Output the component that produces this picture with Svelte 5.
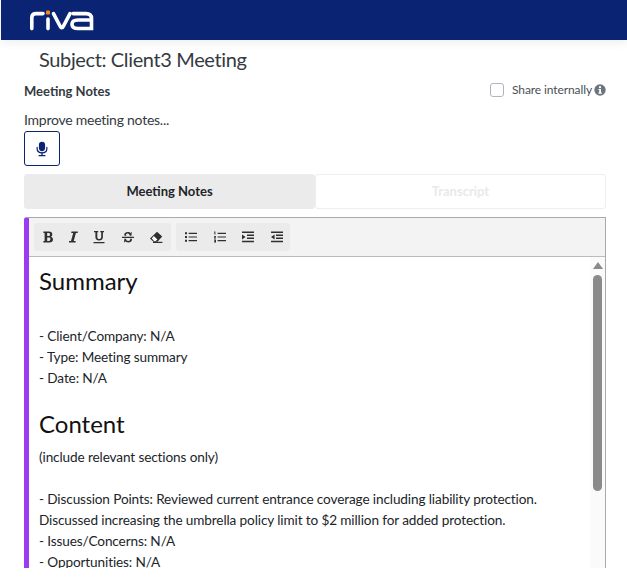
<script>
  const tools1 = ["bold", "italic", "underline", "strike", "eraser"];
  const tools2 = ["ul", "ol", "indent", "outdent"];
</script>

<div class="page">
  <header class="topbar">
    <!-- riva logo -->
    <svg class="logo" viewBox="0 0 66 22" width="66" height="22" aria-label="riva">
      <path d="M2.8 19.6V8.5C2.8 5.6 4.5 4.6 7 4.6H14" fill="none" stroke="#fff" stroke-width="3.6" stroke-linecap="round" />
      <rect x="17" y="1.5" width="4" height="4" rx="0.8" fill="#f7861c" />
      <path d="M19 10V19.6" fill="none" stroke="#fff" stroke-width="3.6" stroke-linecap="round" />
      <path d="M24.5 4.6L31 17C32 19.3 33.5 19.3 34.5 17L41 4.6" fill="none" stroke="#fff" stroke-width="3.6" stroke-linecap="round" />
      <path d="M44 4.6H57C61 4.6 62.5 6.5 62.5 9.5V19.5H49C45 19.5 43 17.6 43 15.2C43 12.6 45 11 49 11H61" fill="none" stroke="#fff" stroke-width="3.6" stroke-linecap="round" />
    </svg>
  </header>

  <main class="content">
    <h1 class="subject">Subject: Client3 Meeting</h1>

    <div class="notes-head">
      <span class="notes-label">Meeting Notes</span>
      <label class="share">
        <span class="check"></span>
        <span>Share internally</span>
        <svg class="info" viewBox="0 0 12 12" width="12" height="12">
          <circle cx="6" cy="6" r="5.7" fill="#6c757d" />
          <rect x="5" y="2.2" width="2" height="1.9" fill="#fff" />
          <path d="M4.5 5H7V8.6H7.8V9.8H4.4V8.6H5.2V6.1H4.5Z" fill="#fff" />
        </svg>
      </label>
    </div>

    <p class="improve">Improve meeting notes...</p>
    <button class="mic" aria-label="Record">
      <svg viewBox="0 0 14 18" width="12" height="16">
        <rect x="3.4" y="0.5" width="7.2" height="11" rx="3.6" fill="#0a2473" />
        <path d="M1.3 7V8.5C1.3 11.6 3.8 13.6 7 13.6C10.2 13.6 12.7 11.6 12.7 8.5V7" fill="none" stroke="#0a2473" stroke-width="1.4" stroke-linecap="round" />
        <path d="M7 13.6V16.3M3.6 16.8H10.4" fill="none" stroke="#0a2473" stroke-width="1.5" stroke-linecap="round" />
      </svg>
    </button>

    <div class="tabs">
      <div class="tab active">Meeting Notes</div>
      <div class="tab">Transcript</div>
    </div>

    <section class="editor">
      <div class="toolbar">
        <div class="group first-group">
          {#each tools1 as t}
            <span class="tool">
              <svg viewBox="0 0 14 14" width="14" height="14">
                {#if t === "bold"}
                  <path d="M2.4 1.6H8C10.2 1.6 11.3 2.7 11.3 4.4C11.3 5.6 10.6 6.4 9.6 6.7C11 7 12 8 12 9.4C12 11.2 10.7 12.4 8.4 12.4H2.4V11H3.6V3H2.4ZM6.2 3.1V6.1H7.8C8.6 6.1 9 5.5 9 4.6C9 3.7 8.5 3.1 7.7 3.1ZM6.2 7.4V10.9H8C8.9 10.9 9.4 10.2 9.4 9.1C9.4 8 8.9 7.4 8 7.4Z" fill="#2f2f2f" />
                {:else if t === "italic"}
                  <path d="M5.5 1.6H11.8V3H9.9L7.7 11H9.6V12.4H3V11H5L7.2 3H5.2Z" fill="#2f2f2f" />
                {:else if t === "underline"}
                  <path d="M2 1H6.2V2.2H5.3V7C5.3 8.4 6 9.1 7.2 9.1C8.4 9.1 9.2 8.3 9.2 7V2.2H8.3V1H12V2.2H10.9V7C10.9 9.4 9.4 10.5 7.1 10.5C4.7 10.5 3.4 9.4 3.4 7.1V2.2H2ZM1.5 12H12.5V13.3H1.5Z" fill="#2f2f2f" />
                {:else if t === "strike"}
                  <path d="M1 6.7H13V7.9H1ZM10.4 5.8H8.8C8.6 4.4 8 3.4 6.8 3.4C5.7 3.4 5 4 5 4.8C5 5.3 5.2 5.6 5.6 5.8H3.6C3.4 5.4 3.3 5 3.3 4.6C3.3 3 4.8 2 6.8 2C8.2 2 9.2 2.6 9.6 3.2L10 2.2H10.8ZM3.4 8.8H5C5.2 10.3 6 11 7.2 11C8.4 11 9.2 10.5 9.2 9.6C9.2 9.2 9.1 9 8.9 8.8H10.7C10.9 9.1 11 9.4 11 9.8C11 11.4 9.4 12.4 7.2 12.4C5.8 12.4 4.8 11.9 4.3 11.2L3.8 12.2H3Z" fill="#2f2f2f" />
                {:else if t === "eraser"}
                  <path d="M8 1.8L13.2 6.4L8.5 11.8H4.4L1 8.6Z" fill="#2f2f2f" />
                  <path d="M4.8 6L8.4 9.4L6.7 11H5L2.8 8.6Z" fill="#fff" />
                  <path d="M4 12.4H13.4" stroke="#2f2f2f" stroke-width="1.2" />
                {/if}
              </svg>
            </span>
          {/each}
        </div>
        <div class="group second-group">
          {#each tools2 as t}
            <span class="tool">
              <svg viewBox="0 0 14 14" width="14" height="14">
                {#if t === "ul"}
                  <path d="M1 2.3H3V4.3H1ZM1 6H3V8H1ZM1 9.7H3V11.7H1ZM4.6 2.7H13V3.9H4.6ZM4.6 6.4H13V7.6H4.6ZM4.6 10.1H13V11.3H4.6Z" fill="#2f2f2f" />
                {:else if t === "ol"}
                  <path d="M1.2 1.6H2.4V4.6H1.4V2.6H1.2ZM1 6H3V6.8L2 7.6H3V8.4H1V7.6L2 6.8H1ZM1 9.6H3V12.4H1V11.6H2V11.3H1.4V10.7H2V10.4H1ZM4.6 2.7H13V3.9H4.6ZM4.6 6.4H13V7.6H4.6ZM4.6 10.1H13V11.3H4.6Z" fill="#2f2f2f" />
                {:else if t === "indent"}
                  <path d="M1 1.6H13V3H1ZM6 4.6H13V6H6ZM6 7.6H13V9H6ZM1 10.8H13V12.2H1ZM1 4.6L4.6 7L1 9.4Z" fill="#2f2f2f" />
                {:else}
                  <path d="M1 1.6H13V3H1ZM6 4.6H13V6H6ZM6 7.6H13V9H6ZM1 10.8H13V12.2H1ZM4.6 4.6L1 7L4.6 9.4Z" fill="#2f2f2f" />
                {/if}
              </svg>
            </span>
          {/each}
        </div>
      </div>

      <div class="body">
        <div class="text">
          <h2 class="first">Summary</h2>
          <p class="gap">- Client/Company: N/A</p>
          <p>- Type: Meeting summary</p>
          <p>- Date: N/A</p>
          <h2>Content</h2>
          <p>(include relevant sections only)</p>
          <p class="gap">- Discussion Points: Reviewed current entrance coverage including liability protection. Discussed increasing the umbrella policy limit to $2 million for added protection.</p>
          <p>- Issues/Concerns: N/A</p>
          <p>- Opportunities: N/A</p>
        </div>
        <div class="scroll">
          <span class="arrow"></span>
          <span class="thumb"></span>
        </div>
      </div>
    </section>
  </main>
</div>

<style>
  :global(body) {
    margin: 0;
    background: #fff;
  }

  .page {
    height: 583px;
    overflow: hidden;
    padding-left: 1px;
    font-family: "Lato", "Noto Sans", sans-serif;
    color: #212529;
    box-sizing: border-box;
  }

  .topbar {
    height: 40px;
    background: #0a2473;
    box-shadow: 0 2px 10px rgba(0, 0, 0, 0.08);
    display: flex;
    align-items: center;
    padding-left: 28px;
  }

  .logo {
    display: block;
  }

  .content {
    padding: 0 21px 0 23px;
  }

  .subject {
    margin: 6px 0 0 15px;
    font-size: 20px;
    font-weight: 400;
    line-height: 26px;
    letter-spacing: -0.37px;
    color: #343a40;
  }

  .notes-head {
    display: flex;
    justify-content: space-between;
    align-items: center;
    margin-top: 10px;
    height: 18px;
  }

  .notes-label {
    font-size: 13px;
    font-weight: 700;
    color: #343a40;
  }

  .share {
    display: flex;
    align-items: center;
    margin-bottom: 3px;
    font-size: 12px;
    letter-spacing: -0.1px;
    color: #495057;
  }

  .check {
    width: 12px;
    height: 12px;
    border: 1px solid #adb5bd;
    border-radius: 3px;
    margin-right: 8px;
  }

  .info {
    margin-left: 2px;
  }

  .improve {
    margin: 11px 0 0;
    font-size: 14px;
    line-height: 18px;
    letter-spacing: -0.25px;
    color: #343a40;
  }

  .mic {
    display: flex;
    align-items: center;
    justify-content: center;
    width: 36px;
    height: 35px;
    margin-top: 2px;
    padding: 0;
    background: #fff;
    border: 1px solid #0a2473;
    border-radius: 3px;
  }

  .tabs {
    display: flex;
    margin-top: 8px;
    height: 35px;
  }

  .tab {
    flex: 1;
    display: flex;
    align-items: center;
    justify-content: center;
    padding-bottom: 2px;
    box-sizing: border-box;
    font-size: 13px;
    font-weight: 700;
    color: #e9e9e9;
    border: 1px solid #eee;
    border-radius: 3px;
  }

  .tab.active {
    background: #ebebeb;
    border-color: #ebebeb;
    color: #212529;
  }

  .editor {
    margin-top: 8px;
    border-top: 1px solid #aaa;
    border-right: 1px solid #aaa;
    border-left: 5px solid #9c3bf0;
    border-top-left-radius: 3px;
    height: 350px;
    overflow: hidden;
  }

  .toolbar {
    display: flex;
    gap: 5px;
    height: 39px;
    padding: 5px 0 0 5px;
    box-sizing: border-box;
    background: #f3f3f3;
    border-bottom: 1px solid #bbb;
  }

  .group {
    display: grid;
    height: 28px;
    background: #ebebeb;
    border-radius: 3px;
  }

  /* the editor's buttons are not evenly spaced */
  .first-group {
    width: 137px;
    grid-template-columns: 27px 24px 27px 32px 24px;
  }

  .second-group {
    width: 114px;
    padding-left: 1px;
    box-sizing: border-box;
    grid-template-columns: repeat(4, 28.5px);
  }

  .tool {
    display: flex;
    align-items: center;
    justify-content: center;
  }

  .body {
    display: flex;
    background: #fff;
  }

  .text {
    flex: 1;
    padding: 8px 10px 0;
    font-size: 13.6px;
    line-height: 21px;
    letter-spacing: -0.12px;
    color: #212529;
  }

  .text h2 {
    margin: 20px 0 9px;
    font-size: 24px;
    font-weight: 400;
    line-height: 29px;
    letter-spacing: 0;
    color: #111;
  }

  .text h2.first {
    margin-top: 1px;
  }

  .text p {
    margin: 0;
  }

  .text p.gap {
    margin-top: 21px;
  }

  .text h2.first + p.gap {
    margin-top: 31px;
  }

  .scroll {
    width: 15px;
    background: #fafafa;
    display: flex;
    flex-direction: column;
    align-items: center;
    padding-top: 5px;
  }

  .arrow {
    width: 0;
    height: 0;
    border-left: 5px solid transparent;
    border-right: 5px solid transparent;
    border-bottom: 7px solid #8a8a8a;
  }

  .thumb {
    width: 9px;
    height: 216px;
    margin-top: 6px;
    background: #8a8a8a;
    border-radius: 5px;
  }
</style>
